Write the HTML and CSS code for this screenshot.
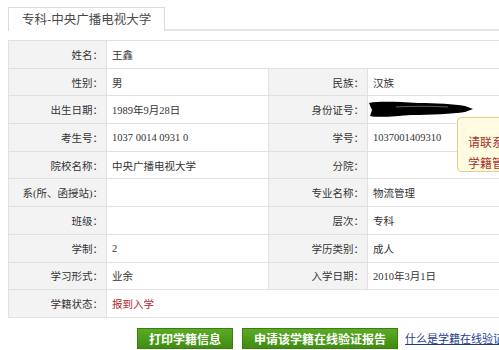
FILE: index.html
```html
<!DOCTYPE html>
<html lang="zh-CN">
<head>
  <meta charset="UTF-8" />
  <title>学籍信息</title>
  <link rel="stylesheet" href="styles.css">
</head>
<body>
  <div class="page">
    <div class="tabs">
      <div class="tab">专科-中央广播电视大学</div>
    </div>

    <table class="info">
      <colgroup>
        <col class="c-label">
        <col class="c-value">
        <col class="c-label2">
        <col class="c-value2">
      </colgroup>
      <tr><th>姓名：</th><td colspan="3">王鑫</td></tr>
      <tr><th>性别：</th><td>男</td><th>民族：</th><td>汉族</td></tr>
      <tr>
        <th>出生日期：</th><td>1989年9月28日</td>
        <th>身份证号：</th>
        <td>
          <svg class="redact" width="106" height="17" viewBox="0 0 106 17">
            <path d="M1 2 C12 0 30 1 50 2 C68 2 86 3 97 5 L105 8 L97 11 C84 13 62 14 44 14 C28 15 12 17 2 15 L4 9 Z" fill="#000"/>
            <path d="M28 6 C45 5 62 5 80 6" stroke="#777" stroke-width="0.8" fill="none"/>
          </svg>
        </td>
      </tr>
      <tr><th>考生号：</th><td>1037 0014 0931 0</td><th>学号：</th><td>1037001409310</td></tr>
      <tr><th>院校名称：</th><td>中央广播电视大学</td><th>分院：</th><td></td></tr>
      <tr><th>系(所、函授站)：</th><td></td><th>专业名称：</th><td>物流管理</td></tr>
      <tr><th>班级：</th><td></td><th>层次：</th><td>专科</td></tr>
      <tr><th>学制：</th><td>2</td><th>学历类别：</th><td>成人</td></tr>
      <tr><th>学习形式：</th><td>业余</td><th>入学日期：</th><td>2010年3月1日</td></tr>
      <tr><th>学籍状态：</th><td colspan="3" class="status">报到入学</td></tr>
    </table>

    <div class="actions">
      <a class="btn" href="#">打印学籍信息</a>
      <a class="btn" href="#">申请该学籍在线验证报告</a>
      <a class="help" href="#">什么是学籍在线验证报告</a>
    </div>

    <div class="tip">请联系学校<br>学籍管理部门</div>
  </div>
</body>
</html>
```

FILE: styles.css
```css
body {
  margin: 0;
  font-family: "Liberation Serif", "Noto Sans CJK SC", serif;
  font-size: 10.5px;
  color: #333;
  background: #fff;
}

.page {
  position: relative;
  width: 499px;
  height: 350px;
  padding: 7px 0 0 8px;
  box-sizing: border-box;
  overflow: hidden;
}

.tabs {
  display: flex;
  border-bottom: 2px solid #e6e6e6;
}

.tab {
  height: 23px;
  margin-bottom: -2px;
  padding: 0 13px;
  border: 1px solid #dcdcdc;
  border-bottom: none;
  background: #fff;
  font-family: "Noto Sans CJK SC", sans-serif;
  font-size: 12.5px;
  line-height: 21px;
  color: #4a4a4a;
}

.info {
  margin-top: 9px;
  width: 560px;
  table-layout: fixed;
  border-collapse: collapse;
}

.c-label { width: 98px; }
.c-value { width: 162px; }
.c-label2 { width: 99px; }
.c-value2 { width: 201px; }

.info tr {
  height: 27.7px;
}

.info th,
.info td {
  border: 1px solid #e1e1e1;
  white-space: nowrap;
  overflow: hidden;
}

.info th {
  background: #f3f3f3;
  font-weight: normal;
  text-align: right;
  padding: 0 3px 0 0;
}

.info td {
  padding: 0 0 0 5px;
}

.info .status {
  color: #b0262e;
}

.redact {
  display: block;
  margin-left: -5px;
}

.actions {
  display: flex;
  align-items: center;
  margin-top: 10px;
  padding-left: 129px;
}

.btn {
  flex-shrink: 0;
  height: 21px;
  margin-right: 9px;
  padding: 0 11px;
  border: 1px solid #3a7d10;
  background: linear-gradient(#5cab26, #3f8c12);
  box-sizing: border-box;
  color: #fff;
  font-family: "Noto Sans CJK SC", sans-serif;
  font-size: 12px;
  font-weight: bold;
  line-height: 19px;
  text-decoration: none;
  white-space: nowrap;
}

.help {
  flex-shrink: 0;
  margin-left: -2px;
  font-family: "Noto Sans CJK SC", sans-serif;
  font-size: 11px;
  color: #1d3c8c;
  white-space: nowrap;
}

.tip {
  position: absolute;
  left: 457px;
  top: 117px;
  width: 90px;
  height: 55px;
  padding: 13px 0 0 10px;
  box-sizing: border-box;
  border: 1px solid #e2cf8a;
  border-radius: 4px;
  background: #fffbe1;
  font-family: "Noto Sans CJK SC", sans-serif;
  font-size: 12px;
  line-height: 21px;
  color: #a8312a;
  white-space: nowrap;
}
```
